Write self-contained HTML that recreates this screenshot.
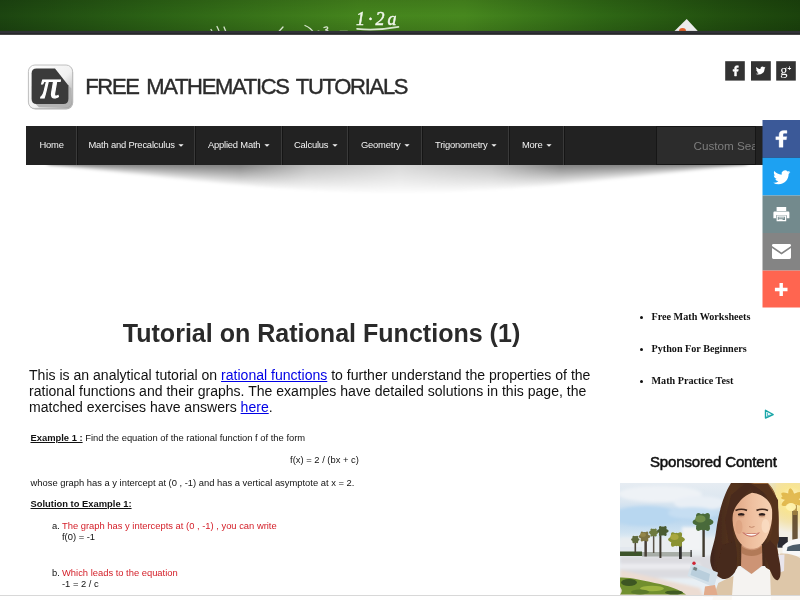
<!DOCTYPE html>
<html lang="en">
<head>
<meta charset="utf-8">
<title>Tutorial on Rational Functions (1)</title>
<style>
html,body{margin:0;padding:0;}
body{width:800px;height:600px;overflow:hidden;position:relative;background:#fff;font-family:"Liberation Sans",sans-serif;color:#000;}
.abs{position:absolute;white-space:nowrap;}
#title{left:85.200px;top:72.6px;font-size:22px;line-height:28px;letter-spacing:-1.300px;word-spacing:2.700px;color:#2b2b2b;-webkit-text-stroke:.4px #2b2b2b;}
.soc{width:20px;height:20px;top:61px;background:#333;}
#nav{left:26px;top:126px;width:774px;height:39px;background:#222;}
.ni{top:0;height:39px;line-height:37.500px;font-size:9.400px;color:#f2f2f2;letter-spacing:-.2px;}
.sep{top:0;width:1px;height:39px;background:#3a3a3a;border-right:1px solid #151515;}
.caret{display:inline-block;width:0;height:0;border-left:3px solid transparent;border-right:3px solid transparent;border-top:3px solid #f2f2f2;vertical-align:middle;margin-left:3.500px;margin-top:0;transform:scale(.88);}
#search{left:629.5px;top:0;width:98.5px;height:37px;background:#2c2c2c;border:1px solid #161616;overflow:hidden;}
#search span{position:absolute;left:37px;top:0;line-height:37.500px;font-size:11.700px;color:#7d7d7d;}
h1{margin:0;font-size:25.050px;font-weight:bold;color:#2a2a2a;left:26px;width:591px;text-align:center;top:319px;line-height:29px;}
#para{left:29px;top:366.5px;font-size:14.06px;line-height:16.45px;color:#111;white-space:nowrap;}
a{color:#0000e6;text-decoration:underline;}
.sm{font-size:9.4px;line-height:11px;color:#111;}
.red{color:#d4202a;}
.side{font-family:"Liberation Serif",serif;font-weight:bold;font-size:10.16px;line-height:12px;color:#111;left:651.500px;}
.bul{left:640px;width:3px;height:3px;border-radius:50%;background:#111;}
#spons{left:650px;top:451.600px;font-size:15px;line-height:20px;color:#111;-webkit-text-stroke:.55px #111;letter-spacing:-.15px;}
#bottombar{left:0;top:595px;width:800px;height:5px;background:rgba(255,255,255,.88);border-top:1px solid #d8d8d8;}
</style>
</head>
<body>
<div id="wrap" style="position:absolute;left:0;top:0;width:800px;height:600px;will-change:transform;">
<svg id="band" class="abs" style="left:0;top:0" width="800" height="36" viewBox="0 0 800 36">
<defs>
<linearGradient id="bg1" x1="0" y1="0" x2="1" y2="0"><stop offset="0" stop-color="#1c4510"/><stop offset=".2" stop-color="#2c6315"/><stop offset=".45" stop-color="#45851d"/><stop offset=".58" stop-color="#47881e"/><stop offset=".75" stop-color="#2f6815"/><stop offset=".9" stop-color="#22500f"/><stop offset="1" stop-color="#1b430c"/></linearGradient>
<linearGradient id="bg2" x1="0" y1="0" x2="0" y2="1"><stop offset="0" stop-color="#000" stop-opacity=".1"/><stop offset=".5" stop-color="#000" stop-opacity="0"/><stop offset="1" stop-color="#000" stop-opacity=".12"/></linearGradient>
</defs>
<rect width="800" height="31.500" fill="url(#bg1)"/>
<rect width="800" height="31.500" fill="url(#bg2)"/>
<g fill="none" stroke="#e9f2e2" stroke-width="1.3" stroke-linecap="round" opacity=".9">
<path d="M211 29.500l1.500 2.500M217 26.500 q1.500 3 2.500 6M224 27 l2 5"/>
<path d="M283 27 l-5 5.500"/>
<path d="M305 25.500 q6 2.500 8.500 7"/>
<path d="M318 31.200h1M324 27.500 q3.500 -1.500 3.800 .5 q-.5 1.500 -2.500 2 q3.500 0 3 2.500"/>
<path d="M340 31.300 h7.500"/>
<path d="M357 28.900 Q376 31 398.500 26.900" stroke-width="1.600"/>
</g>
<text x="356" y="24.600" font-family="'Liberation Serif','DejaVu Serif',serif" font-style="italic" font-size="18" fill="#f1f7ec" stroke="#f1f7ec" stroke-width=".45" letter-spacing="3">1·2a</text>
<path d="M673.500 32 L686.700 19 L698.700 32 Z" fill="#ececec"/>
<path d="M679 31.200 A3.500 3.200 0 0 1 686 31.200 Z" fill="#e0602a"/>
<rect x="0" y="31" width="800" height="3.800" fill="#1b1b1b"/><rect x="0" y="30.900" width="800" height="2.700" fill="#303236"/>
</svg>

<svg id="logo" class="abs" style="left:26px;top:63px" width="50" height="49" viewBox="26 63 50 49">
<defs>
<linearGradient id="lg1" x1="0" y1="0" x2="1" y2="1"><stop offset="0" stop-color="#ffffff"/><stop offset=".55" stop-color="#f1f1f1"/><stop offset="1" stop-color="#9a9a9a"/></linearGradient>
<filter id="lgb" x="-20%" y="-20%" width="140%" height="140%"><feGaussianBlur stdDeviation=".7"/></filter>
</defs>
<rect x="28.6" y="65.6" width="44.6" height="44" rx="7" fill="#000" opacity=".28" filter="url(#lgb)"/>
<rect x="28.4" y="65" width="44.2" height="43.6" rx="6.5" fill="url(#lg1)" stroke="#b9b9b9" stroke-width=".9"/>
<path d="M68 85 L71.4 88.500 V101.4 Q71.4 107.2 65.4 107.2 H39 L34.5 103 H62 L68 98 Z" fill="#b3b3b3"/>
<path d="M36.6 68.6 H55 L68.4 85.500 V99 Q68.4 104 63.4 104 H36.6 Q31.6 104 31.6 99 V73.6 Q31.6 68.6 36.6 68.6 Z" fill="#3b3b3b"/>
<text x="50" y="98.4" text-anchor="middle" font-family="'Liberation Serif','DejaVu Serif',serif" font-style="italic" font-size="38" fill="#fff" stroke="#fff" stroke-width="1.1">π</text>
</svg>
<div id="title" class="abs">FREE MATHEMATICS TUTORIALS</div>

<svg class="abs" style="left:720px;top:56px" width="80" height="30" viewBox="720 56 80 30">
<rect x="725.2" y="61.2" width="19.6" height="19.4" fill="#333"/>
<rect x="751" y="61.2" width="19.8" height="19.4" fill="#333"/>
<rect x="776.2" y="61.2" width="19.6" height="19.4" fill="#333"/>
<g transform="translate(728.5 63.6) scale(.59)" fill="#fff" stroke="#fff" stroke-width=".9"><path d="M13.5 21v-8h2.7l.4-3.1h-3.1V7.9c0-.9.25-1.5 1.55-1.5h1.65V3.6c-.29-.04-1.27-.12-2.4-.12-2.38 0-4 1.45-4 4.12v2.3H7.6V13h2.7v8z"/></g>
<g transform="translate(755.7 65.7) scale(.41)" fill="#fff"><path d="M23.953 4.57a10 10 0 01-2.825.775 4.958 4.958 0 002.163-2.723c-.951.555-2.005.959-3.127 1.184a4.92 4.92 0 00-8.384 4.482C7.69 8.095 4.067 6.13 1.64 3.162a4.822 4.822 0 00-.666 2.475c0 1.71.87 3.213 2.188 4.096a4.904 4.904 0 01-2.228-.616v.06a4.923 4.923 0 003.946 4.827 4.996 4.996 0 01-2.212.085 4.936 4.936 0 004.604 3.417 9.867 9.867 0 01-6.102 2.105c-.39 0-.779-.023-1.17-.067a13.995 13.995 0 007.557 2.209c9.053 0 13.998-7.496 13.998-13.985 0-.21 0-.42-.015-.63A9.935 9.935 0 0024 4.59z"/></g>
<text x="780.2" y="74.6" font-family="'Liberation Serif',serif" font-size="14.5" fill="#fff">g</text>
<text x="787.4" y="71.2" font-family="'Liberation Sans',sans-serif" font-size="6.5" font-weight="bold" fill="#fff">+</text>
</svg>

<svg id="navshadow" class="abs" style="left:0;top:160px" width="800" height="40" viewBox="0 160 800 40">
<defs>
<filter id="nsb1" x="-5%" y="-50%" width="110%" height="200%"><feGaussianBlur stdDeviation="2 1.500"/></filter>
<clipPath id="nsc"><rect x="0" y="165" width="800" height="35"/></clipPath>
<linearGradient id="nsh" gradientUnits="userSpaceOnUse" x1="0" y1="0" x2="800" y2="0"><stop offset="0" stop-color="#fff"/><stop offset=".3" stop-color="#fff"/><stop offset=".385" stop-color="#858585"/><stop offset=".5" stop-color="#505050"/><stop offset=".615" stop-color="#858585"/><stop offset=".7" stop-color="#fff"/><stop offset="1" stop-color="#fff"/></linearGradient>
<mask id="nsm" maskUnits="userSpaceOnUse" x="0" y="160" width="800" height="40"><rect x="0" y="160" width="800" height="40" fill="url(#nsh)"/></mask>
</defs>
<g clip-path="url(#nsc)"><g mask="url(#nsm)"><g fill="#000" fill-opacity=".083" filter="url(#nsb1)">
<path d="M48 160 L48 165 C 230 166.49, 310 167.01, 397 167.01 C 484 167.01, 565 166.49, 747 165 L747 160 Z"/>
<path d="M48 160 L48 165 C 230 168.54, 310 169.77, 397 169.77 C 484 169.77, 565 168.54, 747 165 L747 160 Z"/>
<path d="M48 160 L48 165 C 230 170.87, 310 172.92, 397 172.92 C 484 172.92, 565 170.87, 747 165 L747 160 Z"/>
<path d="M48 160 L48 165 C 230 173.41, 310 176.35, 397 176.35 C 484 176.35, 565 173.41, 747 165 L747 160 Z"/>
<path d="M48 160 L48 165 C 230 176.11, 310 180.00, 397 180.00 C 484 180.00, 565 176.11, 747 165 L747 160 Z"/>
<path d="M48 160 L48 165 C 230 178.96, 310 183.84, 397 183.84 C 484 183.84, 565 178.96, 747 165 L747 160 Z"/>
<path d="M48 160 L48 165 C 230 181.93, 310 187.85, 397 187.85 C 484 187.85, 565 181.93, 747 165 L747 160 Z"/>
<path d="M48 160 L48 165 C 230 185.00, 310 192.00, 397 192.00 C 484 192.00, 565 185.00, 747 165 L747 160 Z"/>
</g></g></g>
</svg>
<div id="nav" class="abs">
  <div class="abs ni" style="left:13.5px">Home</div>
  <div class="abs sep" style="left:50px"></div>
  <div class="abs ni" style="left:62.5px">Math and Precalculus<i class="caret"></i></div>
  <div class="abs sep" style="left:168px"></div>
  <div class="abs ni" style="left:182px">Applied Math<i class="caret"></i></div>
  <div class="abs sep" style="left:255px"></div>
  <div class="abs ni" style="left:268px">Calculus<i class="caret"></i></div>
  <div class="abs sep" style="left:321px"></div>
  <div class="abs ni" style="left:335px">Geometry<i class="caret"></i></div>
  <div class="abs sep" style="left:395px"></div>
  <div class="abs ni" style="left:409px">Trigonometry<i class="caret"></i></div>
  <div class="abs sep" style="left:482px"></div>
  <div class="abs ni" style="left:496px">More<i class="caret"></i></div>
  <div class="abs sep" style="left:537px"></div>
  <div id="search" class="abs"><span>Custom Search</span></div>
</div>

<svg id="share" class="abs" style="left:760px;top:118px" width="40" height="192" viewBox="760 118 40 192">
<rect x="762.5" y="120" width="38" height="37.8" fill="#3b5998"/>
<rect x="762.5" y="157.8" width="38" height="37.7" fill="#1da1f2"/>
<rect x="762.5" y="195.5" width="38" height="37.5" fill="#738a8d"/>
<rect x="762.5" y="233" width="38" height="37.6" fill="#848484"/>
<rect x="762.5" y="270.6" width="38" height="36.9" fill="#ff6550"/>
<g transform="translate(766.500 127.160) scale(1.224 .96)" fill="#fff" stroke="#fff" stroke-width=".3"><path d="M13.5 21v-8h2.7l.4-3.1h-3.1V7.9c0-.9.25-1.5 1.55-1.5h1.65V3.6c-.29-.04-1.27-.12-2.4-.12-2.38 0-4 1.45-4 4.12v2.3H7.6V13h2.7v8z"/></g>
<g transform="translate(773.2 168.8) scale(.715)" fill="#fff"><path d="M23.953 4.57a10 10 0 01-2.825.775 4.958 4.958 0 002.163-2.723c-.951.555-2.005.959-3.127 1.184a4.92 4.92 0 00-8.384 4.482C7.69 8.095 4.067 6.13 1.64 3.162a4.822 4.822 0 00-.666 2.475c0 1.71.87 3.213 2.188 4.096a4.904 4.904 0 01-2.228-.616v.06a4.923 4.923 0 003.946 4.827 4.996 4.996 0 01-2.212.085 4.936 4.936 0 004.604 3.417 9.867 9.867 0 01-6.102 2.105c-.39 0-.779-.023-1.17-.067a13.995 13.995 0 007.557 2.209c9.053 0 13.998-7.496 13.998-13.985 0-.21 0-.42-.015-.63A9.935 9.935 0 0024 4.59z"/></g>
<g fill="#fff">
<path d="M776.6 207 h9.6 v4 h-9.6z M774.6 211.6 h13.6 q1.2 0 1.2 1.2 v5.4 h-2.6 v-3 h-10.8 v3 h-2.6 v-5.4 q0-1.2 1.200-1.200z"/>
<path d="M777.2 216.200 h8.400 v4.400 h-8.400z" fill="none" stroke="#fff" stroke-width="1.2"/>
<path d="M778.600 217.600h5.600v.7h-5.600zM778.600 219h4v.7h-4z"/>
<path d="M773.4 244 h16.200 q1.400 0 1.400 1.400 v.6 l-9.500 6.400 l-9.500 -6.400 v-.6 q0-1.400 1.400-1.400z M772 248 l9.500 6.400 l9.500 -6.400 v9.600 q0 1.400 -1.400 1.400 h-16.200 q-1.400 0 -1.400 -1.400z"/>
<path d="M779.500 283 h3.400 v4.800 h4.600 v3.400 h-4.600 v4.800 h-3.400 v-4.800 h-4.600 v-3.400 h4.600z"/>
</g>
</svg>

<h1 class="abs">Tutorial on Rational Functions (1)</h1>
<div id="para" class="abs">This is an analytical tutorial on <a>rational functions</a> to further understand the properties of the<br>rational functions and their graphs. The examples have detailed solutions in this page, the<br>matched exercises have answers <a>here</a>.</div>

<div class="abs sm" style="left:30.5px;top:432px"><b><u>Example 1 :</u></b> Find the equation of the rational function f of the form</div>
<div class="abs sm" style="left:26px;width:597px;text-align:center;top:453.5px">f(x) = 2 / (bx + c)</div>
<div class="abs sm" style="left:30.5px;top:476.5px">whose graph has a y intercept at (0 , -1) and has a vertical asymptote at x = 2.</div>
<div class="abs sm" style="left:30.5px;top:497.5px"><b><u>Solution to Example 1:</u></b></div>
<div class="abs sm" style="left:52px;top:519.5px">a.</div>
<div class="abs sm red" style="left:62px;top:519.5px">The graph has y intercepts at (0 , -1) , you can write</div>
<div class="abs sm" style="left:62px;top:530.5px">f(0) = -1</div>
<div class="abs sm" style="left:52px;top:566.5px">b.</div>
<div class="abs sm red" style="left:62px;top:566.5px">Which leads to the equation</div>
<div class="abs sm" style="left:62px;top:577.5px">-1 = 2 / c</div>

<div class="abs bul" style="top:316px"></div><div class="abs side" style="top:311px">Free Math Worksheets</div>
<div class="abs bul" style="top:348px"></div><div class="abs side" style="top:343px">Python For Beginners</div>
<div class="abs bul" style="top:380px"></div><div class="abs side" style="top:375px">Math Practice Test</div>

<svg class="abs" style="left:760px;top:405px" width="20" height="18" viewBox="760 405 20 18"><path d="M765.500 410.300 L773.200 414.500 L765.500 418 Z" fill="none" stroke="#18a6a6" stroke-width="1.400" stroke-linejoin="round"/><path d="M767.600 412.600 L767.600 416.200 L770.300 414.800" fill="none" stroke="#4bb9c8" stroke-width="1" stroke-linejoin="round"/></svg>
<div id="spons" class="abs">Sponsored Content</div>
<svg id="photo" class="abs" style="left:620px;top:483px" width="180" height="117" viewBox="620 483 180 117">
<defs>
<linearGradient id="sky" x1="0" y1="0" x2="0" y2="1"><stop offset="0" stop-color="#e6ecf2"/><stop offset=".16" stop-color="#dbe6f0"/><stop offset=".3" stop-color="#b7d5ee"/><stop offset=".42" stop-color="#cfe2f1"/><stop offset=".5" stop-color="#e8eff4"/><stop offset="1" stop-color="#e8eff4"/></linearGradient>
<radialGradient id="sun" cx="792" cy="499" r="34" gradientUnits="userSpaceOnUse"><stop offset="0" stop-color="#fffbe0"/><stop offset=".35" stop-color="#f9e58e" stop-opacity=".95"/><stop offset=".7" stop-color="#f3d670" stop-opacity=".45"/><stop offset="1" stop-color="#f3d670" stop-opacity="0"/></radialGradient>
<linearGradient id="hairg" x1="0" y1="0" x2="1" y2="0"><stop offset="0" stop-color="#40261a"/><stop offset=".3" stop-color="#54321f"/><stop offset=".75" stop-color="#46291a"/><stop offset="1" stop-color="#7a4a28"/></linearGradient>
<linearGradient id="skin" x1="0" y1="0" x2="1" y2="0"><stop offset="0" stop-color="#dfa583"/><stop offset=".5" stop-color="#efc0a0"/><stop offset="1" stop-color="#f6d2b4"/></linearGradient>
<filter id="pb" x="-5%" y="-5%" width="110%" height="110%"><feGaussianBlur stdDeviation=".7"/></filter>
<filter id="pb2" x="-20%" y="-20%" width="140%" height="140%"><feGaussianBlur stdDeviation="1.6"/></filter>
<clipPath id="pc"><rect x="620" y="483" width="180" height="117"/></clipPath>
</defs>
<g clip-path="url(#pc)">
<rect x="620" y="483" width="180" height="117" fill="url(#sky)"/>
<g filter="url(#pb2)">
<ellipse cx="660" cy="494" rx="42" ry="8" fill="#eef2f6"/>
<ellipse cx="700" cy="503" rx="26" ry="7" fill="#e9eff5"/>
<ellipse cx="646" cy="516" rx="34" ry="10" fill="#b8d7f0"/>
<ellipse cx="692" cy="513" rx="24" ry="6" fill="#c6def2"/>
<rect x="620" y="538" width="100" height="20" fill="#e9edf0"/>
<rect x="682" y="527" width="20" height="24" fill="#f1f3f5"/>
<rect x="620" y="556" width="100" height="22" fill="#dbdbe0"/>
<rect x="620" y="563.500" width="80" height="5.500" fill="#ebebef"/>
<path d="M620 570 L700 588 L705 600 L620 600 Z" fill="#ecdcd2"/>
</g>
<g filter="url(#pb)">
<rect x="620" y="547" width="22" height="5" fill="#e3e8ee"/>
<rect x="620" y="551.500" width="22" height="4.500" fill="#3c5229"/>
<rect x="642" y="552" width="50" height="4.500" fill="#8b9389" opacity=".7"/>
<rect x="634.5" y="539.5" width="1.6" height="13.5" fill="#4b4439"/>
<ellipse cx="635.3" cy="539.5" rx="4.2" ry="1.8" fill="#5f6a3c" transform="rotate(0 635.3 539.5)"/>
<ellipse cx="635.3" cy="539.5" rx="4.2" ry="1.8" fill="#5f6a3c" transform="rotate(55 635.3 539.5)"/>
<ellipse cx="635.3" cy="539.5" rx="4.2" ry="1.8" fill="#5f6a3c" transform="rotate(-55 635.3 539.5)"/>
<ellipse cx="635.3" cy="539.5" rx="3.4" ry="1.8" fill="#5f6a3c" transform="rotate(90 635.3 539.5)"/>
<rect x="644.4" y="536.5" width="2.5" height="20.0" fill="#4a4038"/>
<ellipse cx="644.5" cy="536.5" rx="5.8" ry="2.4" fill="#7d7342" transform="rotate(0 644.5 536.5)"/>
<ellipse cx="644.5" cy="536.5" rx="5.8" ry="2.4" fill="#7d7342" transform="rotate(55 644.5 536.5)"/>
<ellipse cx="644.5" cy="536.5" rx="5.8" ry="2.4" fill="#7d7342" transform="rotate(-55 644.5 536.5)"/>
<ellipse cx="644.5" cy="536.5" rx="4.6" ry="2.4" fill="#7d7342" transform="rotate(90 644.5 536.5)"/>
<ellipse cx="643.0" cy="534.8" rx="2.9" ry="2.0" fill="#94864a"/>
<rect x="652.9" y="532.5" width="1.5" height="20.5" fill="#5a5348"/>
<ellipse cx="653.6" cy="532.5" rx="4.6" ry="1.9" fill="#6d7a40" transform="rotate(0 653.6 532.5)"/>
<ellipse cx="653.6" cy="532.5" rx="4.6" ry="1.9" fill="#6d7a40" transform="rotate(55 653.6 532.5)"/>
<ellipse cx="653.6" cy="532.5" rx="4.6" ry="1.9" fill="#6d7a40" transform="rotate(-55 653.6 532.5)"/>
<ellipse cx="653.6" cy="532.5" rx="3.7" ry="1.9" fill="#6d7a40" transform="rotate(90 653.6 532.5)"/>
<rect x="659.4" y="531.0" width="2" height="27.0" fill="#3d382f"/>
<ellipse cx="662.8" cy="531" rx="5.8" ry="2.4" fill="#4b5b31" transform="rotate(0 662.8 531)"/>
<ellipse cx="662.8" cy="531" rx="5.8" ry="2.4" fill="#4b5b31" transform="rotate(55 662.8 531)"/>
<ellipse cx="662.8" cy="531" rx="5.8" ry="2.4" fill="#4b5b31" transform="rotate(-55 662.8 531)"/>
<ellipse cx="662.8" cy="531" rx="4.6" ry="2.4" fill="#4b5b31" transform="rotate(90 662.8 531)"/>
<rect x="679.0" y="539.5" width="2.8" height="19.5" fill="#2e2e2e"/>
<ellipse cx="676.5" cy="539.5" rx="8.4" ry="3.5" fill="#8a9233" transform="rotate(0 676.5 539.5)"/>
<ellipse cx="676.5" cy="539.5" rx="8.4" ry="3.5" fill="#8a9233" transform="rotate(55 676.5 539.5)"/>
<ellipse cx="676.5" cy="539.5" rx="8.4" ry="3.5" fill="#8a9233" transform="rotate(-55 676.5 539.5)"/>
<ellipse cx="676.5" cy="539.5" rx="6.7" ry="3.5" fill="#8a9233" transform="rotate(90 676.5 539.5)"/>
<ellipse cx="674.4" cy="537.0" rx="4.2" ry="2.9" fill="#aaa840"/>
<rect x="702.4" y="522.0" width="2.4" height="35.0" fill="#3f3a2e"/>
<ellipse cx="703" cy="522" rx="10.5" ry="4.4" fill="#4a6b3a" transform="rotate(0 703 522)"/>
<ellipse cx="703" cy="522" rx="10.5" ry="4.4" fill="#4a6b3a" transform="rotate(55 703 522)"/>
<ellipse cx="703" cy="522" rx="10.5" ry="4.4" fill="#4a6b3a" transform="rotate(-55 703 522)"/>
<ellipse cx="703" cy="522" rx="8.4" ry="4.4" fill="#4a6b3a" transform="rotate(90 703 522)"/>
<ellipse cx="700.4" cy="518.9" rx="5.2" ry="3.7" fill="#6e8c4a"/>
<rect x="690.500" y="550" width="1.200" height="7" fill="#333"/>
<path d="M620 577.500 C630 577 645 581 660 584 C672 587 680 590 686 594.500 L620 594.500 C624 590 620 588 620 586 Z" fill="#718f2e"/>
<ellipse cx="629" cy="582.500" rx="8" ry="3.500" fill="#3c5621"/>
<ellipse cx="652" cy="588.500" rx="12" ry="2.800" fill="#9cb440"/>
<ellipse cx="674" cy="592.500" rx="9" ry="2" fill="#3f5a22"/>
<ellipse cx="640" cy="592" rx="9" ry="2.500" fill="#5c7a2a"/>
</g>
<rect x="776" y="483" width="24" height="80" fill="#f3efe6"/>
<circle cx="792" cy="499" r="34" fill="url(#sun)"/>
<g filter="url(#pb)">
<rect x="792.300" y="511" width="5.400" height="29" fill="#5c4727" opacity=".9"/>
<rect x="793" y="505" width="4" height="10" fill="#a5843f" opacity=".8"/>
<g fill="#e0b548" opacity=".9">
<ellipse cx="792" cy="499" rx="12" ry="3.600" transform="rotate(28 792 499)"/>
<ellipse cx="792" cy="499" rx="12" ry="3.600" transform="rotate(-32 792 499)"/>
<ellipse cx="792" cy="499" rx="11" ry="3.400" transform="rotate(80 792 499)"/>
<ellipse cx="792" cy="497" rx="11" ry="3" transform="rotate(-5 792 497)"/>
</g>
<ellipse cx="791" cy="507" rx="5" ry="4" fill="#fff3b0" opacity=".95"/>
<rect x="777.300" y="537" width="10.500" height="10.700" fill="#2c2c32"/>
<path d="M782.500 556 L782.500 546 Q788 540 800 538.300 L800 556 Z" fill="#f8f8f8"/>
<path d="M786.700 551 L787.500 547 Q792 544.500 800 544 L800 551 Z" fill="#4c5b69"/>

<path d="M731 483 C724 494 718.500 512 716 532 C714 546 709 555 710.500 563 C712 571 717 577.500 723.500 579 C730 578 735 571 739 566 L765 566 C768 572 771 580.500 776 580.800 C779.500 580.500 781.500 577 781 572 C780.500 565 779.500 560 778.500 555 C777 548 776.500 542 777.500 535 C779.500 523 779 508 776 496.500 C774 490 771 486 767.500 483 Z" fill="url(#hairg)"/>
<path d="M748 483 C756 484 764 486 769 492 C772 497 774 503 774.500 510 L777.500 510 C777.500 500 775 491 768 483 Z" fill="#a06c3a" opacity=".85"/>
<path d="M712.200 600 L718.300 583 Q727 578.500 737 574.500 L751 596 L751 600 Z" fill="#dcc5a7"/>
<path d="M767 600 L769 575 Q773 561 780.500 553.500 Q792 553 800 558 L800 600 Z" fill="#dec7a9"/>
<path d="M777 555 L784.500 554.500 L784 571 L778 573 Z" fill="#e9e5ec"/>
<path d="M738 566 L750.800 574 L763 566 L770 570 L771 600 L731.700 600 L733.500 576 Z" fill="#f5f3f1"/>
<path d="M741.500 545 L762 545 L762.500 565.500 L751.500 574 L741 566.500 Z" fill="#cd9474"/>
<path d="M741.500 546 C746 551 756 552 762 546 L762 553 C756 557 747 557 741.500 553 Z" fill="#a8714f" opacity=".75"/>
<path d="M732.300 514 C732 528 736 541 744 546.500 C748 549.300 755 549.600 759 547 C767 541 772.500 528 772.300 512 C772 502 764 494 752 492.800 C744 496 734 504 732.300 514 Z" fill="url(#skin)"/>
<path d="M753 484 C748 490 744 496 740 501 C736 506 733 510 732.300 518 C732 526 733 534 735 541 L729 545 L725 520 L731 495 L745 484 Z" fill="#4a2b1a"/>
<path d="M751 484 C758 488 768 494 771.500 503 C772.800 510 772.800 520 772 530 C771 538 768 545 764 549 L772 560 L779 540 L778 500 L768 484 Z" fill="#55321e"/>
<path d="M762.500 549 C766 556 768 566 772 575 C774 579 776 580.800 778 580 C781 578 781 572 780 564 L777 548 L770 540 Z" fill="#4b2c1b"/>
<path d="M735 541 C737 552 738 562 735 572 C731 578 726 580 722 578.500 L716 570 L722 545 Z" fill="#46291a"/>
<ellipse cx="741.200" cy="514.600" rx="3.300" ry="1.700" fill="#2a1e1a"/>
<ellipse cx="762" cy="514.600" rx="3.300" ry="1.700" fill="#2a1e1a"/>
<ellipse cx="741.200" cy="516.300" rx="3.400" ry="1.200" fill="#c98f70" opacity=".55"/>
<ellipse cx="762" cy="516.300" rx="3.400" ry="1.200" fill="#c98f70" opacity=".55"/>
<path d="M735.500 510.600 Q741 508 747 510.400" stroke="#3f281c" stroke-width="1.700" fill="none"/>
<path d="M756.500 510.400 Q762.500 508 768 510.600" stroke="#3f281c" stroke-width="1.700" fill="none"/>
<path d="M749 526.500 Q751.500 528.300 754.500 526.500" stroke="#c48a6c" stroke-width="1" fill="none"/>
<path d="M742 532.200 Q751.500 541.500 760.200 532.200 Q751.500 534.800 742 532.200 Z" fill="#c2675c"/>
<path d="M744.200 533.200 Q751.500 538.200 758.200 533.200 Q751.500 535 744.200 533.200 Z" fill="#fdf8f4"/>
<ellipse cx="765.500" cy="526" rx="4" ry="7" fill="#fbe0c8" opacity=".7"/>
<ellipse cx="739" cy="527" rx="3.500" ry="7" fill="#d79a78" opacity=".5"/>
<path d="M691.700 562 L718 572.500 L714 587.500 L687.400 576 Z" fill="#d3e0e9"/>
<path d="M692.500 567 L710 574 L708.500 582 L690.500 575 Z" fill="#b9cedc"/><rect x="694" y="566.800" width="3.600" height="3" fill="#6f7f80" transform="rotate(21 694 566.800)"/>
<circle cx="694" cy="563.200" r="1.700" fill="#d02536"/>
<path d="M705 586.500 L715 585 L718 597 L703.500 597 Z" fill="#e2ab8b"/>
</g>
</g>
</svg>

<div id="bottombar" class="abs"></div>
</div>
</body>
</html>
